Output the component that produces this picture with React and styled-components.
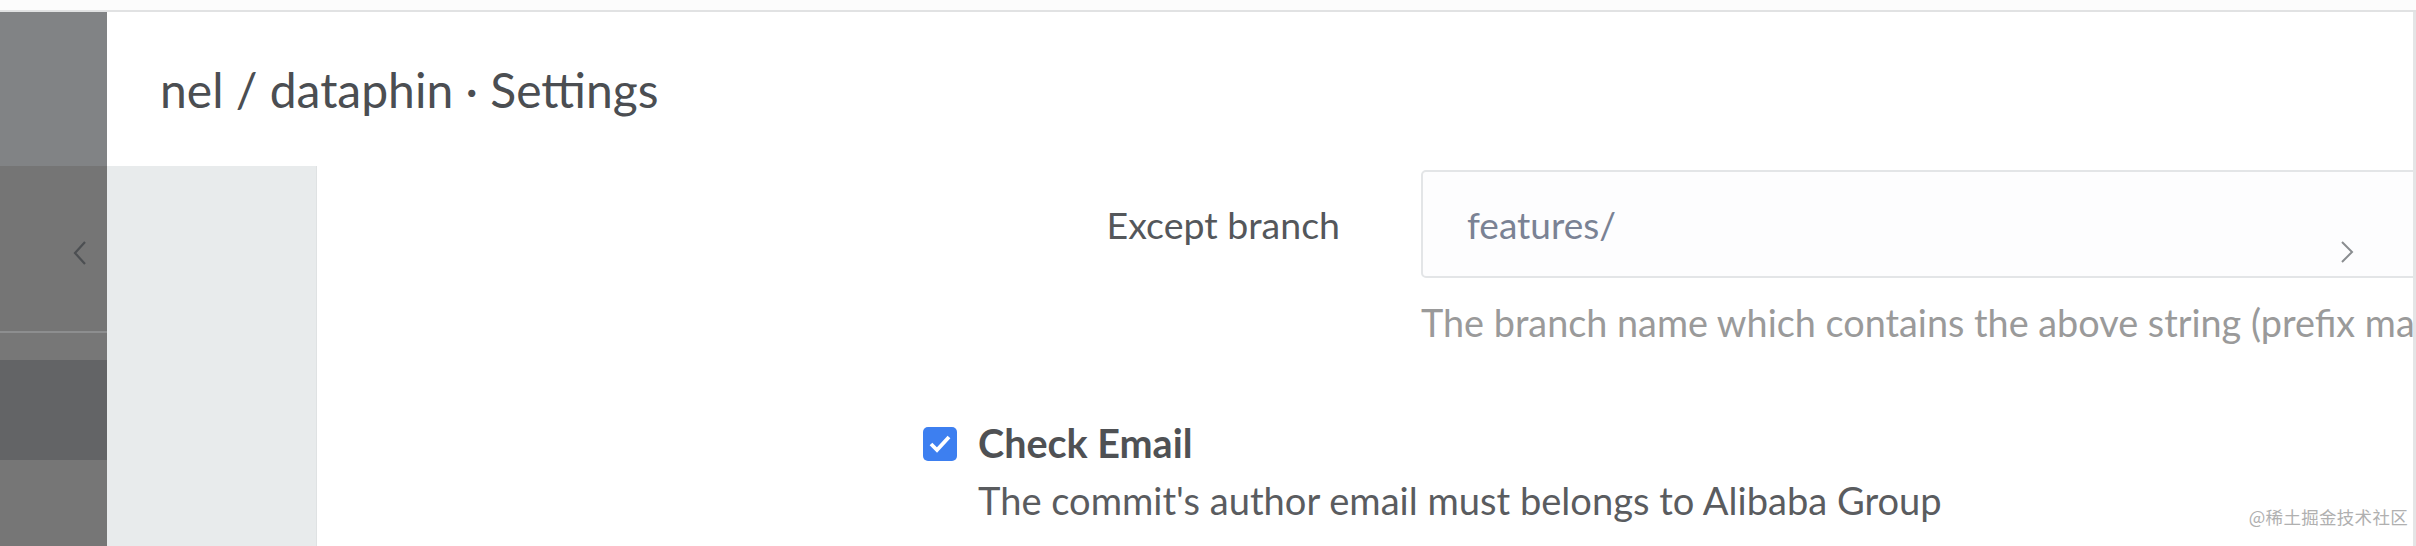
import styled, {createGlobalStyle} from "styled-components";

const GlobalStyle = createGlobalStyle`
  html, body {
    margin: 0;
    padding: 0;
    background: #ffffff;
  }
  body {
    font-family: Lato, "Noto Sans", sans-serif;
    overflow: hidden;
  }
`

const Page = styled.div`
  position: relative;
  width: 2416px;
  height: 546px;
  display: flex;
  flex-direction: column;
  overflow: hidden;
`

const TopStrip = styled.div`
  height: 10px;
  flex-shrink: 0;
  background: #fcfcfc;
  border-bottom: 2px solid #e1e2e3;
`

const Main = styled.div`
  flex: 1;
  display: flex;
  min-height: 0;
`

const Sidebar = styled.div`
  width: 107px;
  flex-shrink: 0;
  display: flex;
  flex-direction: column;
`

const SideBlock = styled.div`
  height: ${p => p.$h}px;
  flex-shrink: 0;
  background: ${p => p.$bg};
  display: flex;
  align-items: center;
  justify-content: flex-end;
  padding-right: 20px;
  padding-top: ${p => p.$offset || 0}px;
  box-sizing: border-box;
`

const SideFill = styled.div`
  flex: 1;
  background: #767676;
`

const Content = styled.div`
  flex: 1;
  display: flex;
  flex-direction: column;
  min-width: 0;
  overflow: hidden;
  border-right: 3px solid #e4e5e6;
`

const Header = styled.div`
  height: 154px;
  flex-shrink: 0;
  display: flex;
  align-items: center;
  padding-left: 53px;
`

const Title = styled.h1`
  margin: 0;
  font-family: Lato, "Noto Sans", sans-serif;
  font-weight: 400;
  font-size: 48px;
  color: #4b4e52;
  white-space: nowrap;
`

const Body = styled.div`
  flex: 1;
  display: flex;
  min-height: 0;
`

const NavPanel = styled.div`
  width: 209px;
  flex-shrink: 0;
  background: #e8ebec;
  border-right: 1px solid #dfe2e3;
`

const Form = styled.div`
  flex: 1;
  padding-top: 4px;
  display: flex;
  flex-direction: column;
  min-width: 0;
`

const FieldGrid = styled.div`
  display: grid;
  grid-template-columns: 1023px 1100px;
  column-gap: 81px;
  align-items: center;
`

const Label = styled.div`
  text-align: right;
  font-size: 37.5px;
  color: #54575b;
  white-space: nowrap;
`

const InputBox = styled.div`
  position: relative;
  height: 108px;
  box-sizing: border-box;
  border: 2px solid #e3e5e7;
  border-radius: 5px;
  background: #fdfdfe;
  display: flex;
  align-items: center;
  padding-left: 44px;
  font-size: 37px;
  color: #7a8294;
`

const ChevronBox = styled.span`
  position: absolute;
  left: 917px;
  top: 68px;
  display: flex;
`

const Helper = styled.div`
  grid-column: 2;
  margin-top: 20px;
  font-size: 37.8px;
  line-height: 50px;
  color: #9a9a9a;
  white-space: nowrap;
`

const CheckRow = styled.div`
  margin-top: 73px;
  padding-left: 606px;
  display: flex;
  gap: 21px;
`

const Checkbox = styled.span`
  width: 34px;
  height: 34px;
  flex-shrink: 0;
  margin-top: 6px;
  border-radius: 5px;
  background: #3d7ff0;
  display: flex;
  align-items: center;
  justify-content: center;
`

const CheckText = styled.div`
  display: flex;
  flex-direction: column;
`

const CheckTitle = styled.div`
  font-size: 39.5px;
  font-weight: 700;
  line-height: 44px;
  color: #4f5154;
`

const CheckDesc = styled.div`
  margin-top: 12px;
  font-size: 38.1px;
  line-height: 46px;
  color: #5a5c5f;
  white-space: nowrap;
`

const Watermark = styled.div`
  position: absolute;
  right: 8px;
  bottom: 17px;
  font-family: "Noto Sans CJK SC", sans-serif;
  font-size: 17.5px;
  color: #b0b0b0;
  letter-spacing: 0.3px;
`

const App = () => {
    return (
        <Page>
            <GlobalStyle/>
            <TopStrip/>
            <Main>
                <Sidebar>
                    <SideBlock $h={154} $bg="#818385"/>
                    <SideBlock $h={165} $bg="#757575" $offset={8}>
                        <svg width="14" height="26" viewBox="0 0 14 26">
                            <polyline points="12,2 2,13 12,24" fill="none" stroke="#4c4f52" strokeWidth="2.2"/>
                        </svg>
                    </SideBlock>
                    <SideBlock $h={2} $bg="#8d8e8f"/>
                    <SideBlock $h={27} $bg="#777777"/>
                    <SideBlock $h={100} $bg="#636466"/>
                    <SideFill/>
                </Sidebar>
                <Content>
                    <Header>
                        <Title>nel / dataphin · Settings</Title>
                    </Header>
                    <Body>
                        <NavPanel/>
                        <Form>
                            <FieldGrid>
                                <Label>Except branch</Label>
                                <InputBox>
                                    features/
                                    <ChevronBox>
                                        <svg width="14" height="24" viewBox="0 0 14 24">
                                            <polyline points="2,2 12,12 2,22" fill="none" stroke="#8a8d90" strokeWidth="2"/>
                                        </svg>
                                    </ChevronBox>
                                </InputBox>
                                <Helper>The branch name which contains the above string (prefix match) will be skipped</Helper>
                            </FieldGrid>
                            <CheckRow>
                                <Checkbox>
                                    <svg width="24" height="20" viewBox="0 0 24 20">
                                        <polyline points="3,10 9,16 21,3" fill="none" stroke="#ffffff" strokeWidth="3.8"/>
                                    </svg>
                                </Checkbox>
                                <CheckText>
                                    <CheckTitle>Check Email</CheckTitle>
                                    <CheckDesc>The commit's author email must belongs to Alibaba Group</CheckDesc>
                                </CheckText>
                            </CheckRow>
                        </Form>
                    </Body>
                </Content>
            </Main>
            <Watermark>@稀土掘金技术社区</Watermark>
        </Page>
    )
}

export default App
